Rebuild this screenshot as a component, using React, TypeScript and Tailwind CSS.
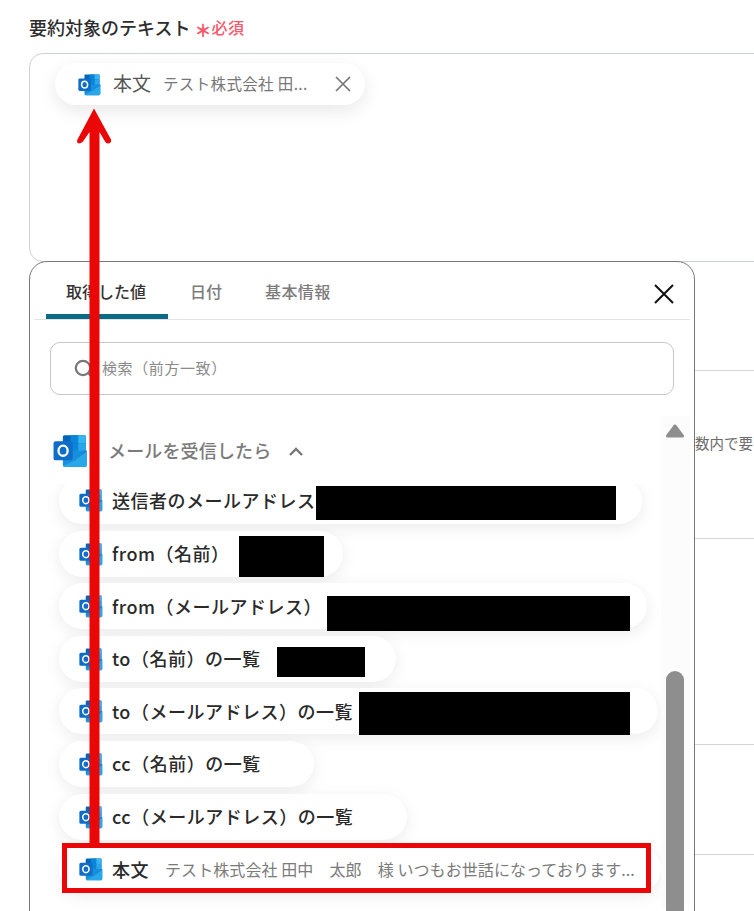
import React from "react";

function Outlook({ size = 24 }: { size?: number }) {
  return (
    <svg width={size} height={size} viewBox="0 0 32 32" className="shrink-0">
      <rect x="9" y="2" width="21" height="22" rx="1.5" fill="#0364b8" />
      <rect x="16" y="2" width="7" height="7.3" fill="#0a86d8" />
      <rect x="23" y="2" width="7" height="7.3" fill="#34b4f0" />
      <rect x="9" y="9.3" width="7" height="7.3" fill="#0078d4" />
      <rect x="16" y="9.3" width="7" height="7.3" fill="#0a86d8" />
      <rect x="23" y="9.3" width="7" height="7.3" fill="#28a8ea" />
      <rect x="16" y="16.6" width="7" height="7.3" fill="#0078d4" />
      <rect x="23" y="16.6" width="7" height="7.3" fill="#14a0e6" />
      <path d="M9 16 L30 16 L31 17 L31 29 Q31 31 29 31 L11 31 Q9 31 9 29 Z" fill="#1490df" />
      <path d="M31 16.5 L31 29 Q31 31 29 31 L11 31 Q9 31 9.5 30 L20 22.5 Z" fill="#28a8ea" />
      <path d="M9.5 30.5 L20 22.5 L31 15.5 L31 17 L21 24.5 Z" fill="#0f6cbd" opacity="0.45" />
      <rect x="0.5" y="7.5" width="17.5" height="17.5" rx="2" fill="#0f6cc8" />
      <ellipse cx="9.2" cy="16.2" rx="4.2" ry="4.6" fill="none" stroke="#ffffff" strokeWidth="2.1" />
    </svg>
  );
}

function Row({
  label,
  widthClass,
  children,
}: {
  label: string;
  widthClass: string;
  children?: React.ReactNode;
}) {
  return (
    <div
      className={`relative flex h-[46px] shrink-0 items-center rounded-full bg-white pl-[20px] shadow-[0_4px_16px_rgba(0,0,0,0.08)] ${widthClass}`}
    >
      <Outlook size={24} />
      <span className="ml-[9px] whitespace-nowrap text-[18px] font-medium tracking-[0.5px] text-[#2a2a2a]">
        {label}
      </span>
      {children}
    </div>
  );
}

function Section({ className }: { className: string }) {
  return <div className={`border-t border-[#d3d5de] ${className}`} />;
}

export default function App() {
  return (
    <div
      className="relative h-[911px] w-[754px] overflow-hidden bg-white"
      style={{ fontFamily: '"Noto Sans CJK JP", "Noto Sans", sans-serif' }}
    >
      {/* form behind the picker */}
      <div className="pl-[29px] pt-[13px]">
        <div className="flex h-[29px] items-center">
          <span className="text-[18px] font-medium text-[#2d2d2d]">要約対象のテキスト</span>
          <span className="ml-[4px] mt-[4px] text-[17px] font-black leading-none text-[#f8566b]">＊</span>
          <span className="-mt-[1px] text-[16px] font-medium leading-none tracking-[0.5px] text-[#f8566b]">必須</span>
        </div>
        <div className="mt-[11px] h-[209px] w-[760px] rounded-l-[14px] border border-[#ccd0dc] pl-[25px] pt-[9px]">
          <div className="flex h-[42px] w-[310px] items-center rounded-full bg-white pl-[23px] shadow-[0_6px_18px_rgba(0,0,0,0.09)]">
            <Outlook size={23} />
            <span className="ml-[12px] -mt-[3px] text-[19px] leading-none text-[#555]">本文</span>
            <span className="ml-[12px] text-[15.5px] leading-none tracking-[0.35px] text-[#777]">テスト株式会社 田...</span>
            <svg width="18" height="18" viewBox="0 0 18 18" className="ml-[26px]">
              <path d="M2 2 L16 16 M16 2 L2 16" stroke="#777" strokeWidth="1.7" />
            </svg>
          </div>
        </div>
        <Section className="mt-[108px] h-[168px]" />
        <Section className="h-[206px]" />
        <Section className="h-[110px]" />
        <Section className="h-[60px]" />
      </div>
      <div className="absolute left-[695px] top-[433px] text-[14.5px] leading-[19px] text-[#6b6b6b]">数内で要</div>
      <div className="absolute left-[695px] top-[538px] h-px w-[59px] bg-[#d3d5de]" />

      {/* picker */}
      <div className="absolute left-[29px] top-[261px] h-[660px] w-[666px] rounded-t-[18px] border border-[#77787c] bg-white">
        <div className="mx-[4px] flex h-[58px] items-start border-b border-[#e2e3e6] pl-[12px]">
          <div className="flex h-[57px] w-[122px] items-center justify-center rounded-t-[3px] border-b-[5px] border-[#0a6b85] pr-[2px] pt-[6px] text-[16px] font-medium text-[#333]">
            取得した値
          </div>
          <div className="ml-[22px] flex h-[57px] items-center pt-[1px] text-[16px] font-medium text-[#7c7c7c]">日付</div>
          <div className="ml-[43px] flex h-[57px] items-center pt-[1px] text-[16px] font-medium tracking-[0.4px] text-[#7c7c7c]">基本情報</div>
          <svg width="22" height="22" viewBox="0 0 22 22" className="ml-auto mr-[15px] mt-[21px]">
            <path d="M2 2 L20 20 M20 2 L2 20" stroke="#111" strokeWidth="2" />
          </svg>
        </div>
        <div className="ml-[20px] mt-[22px] flex h-[53px] w-[624px] items-center rounded-[10px] border border-[#c6c7ca] pl-[23px]">
          <svg width="20" height="20" viewBox="0 0 20 20" className="shrink-0">
            <circle cx="9" cy="9" r="7.2" fill="none" stroke="#777" strokeWidth="2.2" />
            <path d="M14 14 L19 19" stroke="#777" strokeWidth="2" />
          </svg>
          <span className="ml-[8px] text-[15px] tracking-[0.6px] text-[#8a8a8a]">検索（前方一致）</span>
        </div>

        <div className="mt-[21px] flex">
          <div className="w-[631px]">
            <div className="flex h-[68px] items-center pl-[23px]">
              <Outlook size={35} />
              <span className="ml-[20px] text-[18px] font-medium tracking-[0.15px] text-[#7b7b7b]">メールを受信したら</span>
              <svg width="16" height="10" viewBox="0 0 16 10" className="ml-[17px] mt-[3px]">
                <path d="M2 8 L8 2 L14 8" fill="none" stroke="#777" strokeWidth="2.4" />
              </svg>
            </div>
            <div className="flex h-[424px] flex-col gap-[6.6px] overflow-hidden pl-[29px]">
              <Row label="送信者のメールアドレス" widthClass="w-[583px] -mt-[6px] pb-[2px]">
                <div className="absolute left-[257px] top-[8px] h-[34px] w-[300px] bg-black" />
              </Row>
              <Row label="from（名前）" widthClass="w-[284px]">
                <div className="absolute left-[180px] top-[5px] h-[41px] w-[85px] bg-black" />
              </Row>
              <Row label="from（メールアドレス）" widthClass="w-[588px]">
                <div className="absolute left-[268px] top-[13px] h-[35px] w-[303px] bg-black" />
              </Row>
              <Row label="to（名前）の一覧" widthClass="w-[337px]">
                <div className="absolute left-[218px] top-[11px] h-[30px] w-[88px] bg-black" />
              </Row>
              <Row label="to（メールアドレス）の一覧" widthClass="w-[599px]">
                <div className="absolute left-[300px] top-[4px] h-[43px] w-[271px] bg-black" />
              </Row>
              <Row label="cc（名前）の一覧" widthClass="w-[255px]" />
              <Row label="cc（メールアドレス）の一覧" widthClass="w-[348px]" />
              <Row label="本文" widthClass="w-[602px]">
                <span className="ml-[16px] whitespace-nowrap text-[16px] tracking-[0.08px] text-[#7b7b7b]">
                  テスト株式会社 田中　太郎　様 いつもお世話になっております...
                </span>
              </Row>
            </div>
          </div>
          <div className="relative h-[492px] w-[29px] bg-[#fcfcfc]">
            <svg width="18" height="14" viewBox="0 0 18 14" className="absolute left-[5px] top-[8px]">
              <path d="M9 2 L16.5 12 L1.5 12 Z" fill="#8e8e8e" stroke="#8e8e8e" strokeWidth="3" strokeLinejoin="round" />
            </svg>
            <div className="absolute left-[5px] top-[255px] h-[300px] w-[18px] rounded-t-full bg-[#8e8e8e]" />
          </div>
        </div>
      </div>

      {/* red annotation */}
      <svg width="754" height="911" viewBox="0 0 754 911" className="pointer-events-none absolute left-0 top-0">
        <path d="M94 108.5 L111 139.5 Q112 143 108 143.5 Q106 143.5 105 141.5 L99.5 132 L99.5 845 L89.5 845 L89.5 132 L83 141.5 Q81 143.5 79 143.5 Q76 143 77.5 139.5 Z" fill="#e90707" />
      </svg>
      <div className="absolute left-[62px] top-[843px] h-[50px] w-[589px] border-[5px] border-[#e90707]" />
    </div>
  );
}
